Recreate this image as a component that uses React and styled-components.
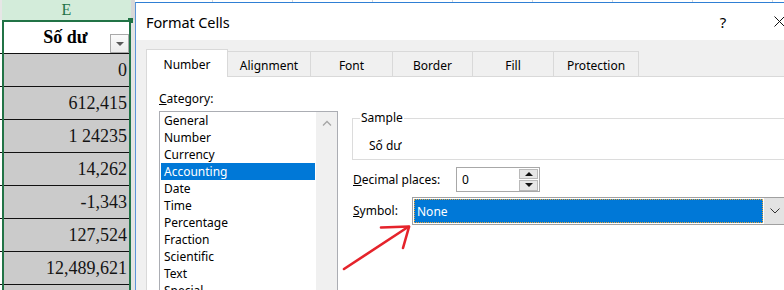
import React from 'react';
import styled, { createGlobalStyle } from 'styled-components';

const Global = createGlobalStyle`
  html, body { margin: 0; padding: 0; width: 784px; height: 290px; overflow: hidden; background: #fff; }
  #root { width: 784px; height: 290px; }
`;

const Screen = styled.div`
  position: relative;
  display: flex;
  width: 784px;
  height: 290px;
  overflow: hidden;
  background: #fff;
`;

/* ---------- spreadsheet ---------- */
const Sheet = styled.div`
  display: flex;
  flex: none;
  width: 135px;
  font-family: "Liberation Serif", "Times New Roman", serif;
`;

const Strip = styled.div`
  display: flex;
  flex-direction: column;
  flex: none;
  width: ${p => p.$w}px;
  background: ${p => p.$bg};
`;

const StripHead = styled.div`
  flex: none;
  height: 20px;
  background: ${p => p.$bg};
`;

const StripCell = styled.div`
  flex: none;
  box-sizing: border-box;
  height: ${p => p.$h}px;
  border-bottom: 1px solid #111;
`;

const ColumnE = styled.div`
  display: flex;
  flex-direction: column;
  flex: none;
  width: 129px;
`;

const ColHead = styled.div`
  flex: none;
  height: 20px;
  display: flex;
  align-items: center;
  justify-content: center;
  background: #d3ecda;
  color: #217346;
  font-size: 16px;
  line-height: 20px;
`;

const Selection = styled.div`
  position: relative;
  flex: 1;
  border: 2px solid #217346;
  border-bottom: none;
  background: #cbcbcb;
`;

const Handle = styled.div`
  position: absolute;
  top: -4px;
  right: -4px;
  width: 5px;
  height: 5px;
  background: #217346;
`;

const HeadCell = styled.div`
  position: relative;
  box-sizing: border-box;
  height: 32px;
  display: flex;
  align-items: center;
  justify-content: center;
  background: #fff;
  border-bottom: 1px solid #111;
  font-weight: bold;
  font-size: 18px;
  color: #000;
  padding-right: 2px;
`;

const FilterButton = styled.div`
  position: absolute;
  right: 0;
  bottom: 0;
  box-sizing: border-box;
  width: 19px;
  height: 19px;
  border: 1px solid #a9a9a9;
  background: linear-gradient(#fbfbfb, #ececec);
  display: flex;
  align-items: center;
  justify-content: center;
  &::after {
    content: "";
    border-left: 4px solid transparent;
    border-right: 4px solid transparent;
    border-top: 4px solid #5a5a5a;
  }
`;

const DataCell = styled.div`
  box-sizing: border-box;
  height: 33px;
  display: flex;
  align-items: center;
  justify-content: flex-end;
  padding-right: 2px;
  border-bottom: 1px solid #111;
  font-size: 18px;
  color: #141414;
`;

/* ---------- dialog ---------- */
const DialogArea = styled.div`
  flex: none;
  padding-top: 2px;
  background: repeating-linear-gradient(90deg, transparent 0, transparent 77px, #d6d6d6 77px, #d6d6d6 78px, transparent 78px, transparent 80px);
`;

const Dialog = styled.div`
  width: 672px;
  height: 290px;
  display: flex;
  flex-direction: column;
  border-top: 1px solid #2f7fd4;
  border-left: 1px solid #5b95d8;
  background: #f0f0f0;
  font-family: "Noto Sans", "Open Sans", sans-serif;
  font-size: 12px;
  color: #000;
`;

const TitleBar = styled.div`
  flex: none;
  height: 37px;
  display: flex;
  align-items: center;
  padding: 0 6px 0 10px;
  background: #fff;
`;

const Title = styled.div`
  font-size: 14.5px;
  letter-spacing: -0.1px;
`;

const TitleButton = styled.div`
  width: 46px;
  height: 37px;
  display: flex;
  align-items: center;
  justify-content: center;
  font-size: 15px;
  margin-left: ${p => (p.$first ? 'auto' : '10px')};
`;

const Body = styled.div`
  flex: 1;
  display: flex;
  flex-direction: column;
  padding: 9px 0 0 10px;
`;

const Tabs = styled.div`
  flex: none;
  display: flex;
  align-items: flex-end;
  height: 27px;
`;

const Tab = styled.div`
  position: relative;
  z-index: ${p => (p.$active ? 1 : 0)};
  box-sizing: border-box;
  width: ${p => p.$w}px;
  height: ${p => (p.$active ? 28 : 25)}px;
  margin-bottom: ${p => (p.$active ? -1 : 0)}px;
  margin-left: -1px;
  display: flex;
  align-items: center;
  justify-content: center;
  border: 1px solid #d9d9d9;
  border-bottom: none;
  background: ${p => (p.$active ? '#fff' : '#f0f0f0')};
  padding-top: 2px;
  &:first-child { margin-left: 0; }
`;

const Panel = styled.div`
  flex: 1;
  display: flex;
  align-items: flex-start;
  background: #fff;
  border-top: 1px solid #d9d9d9;
  border-left: 1px solid #d9d9d9;
`;

const CategoryCol = styled.div`
  flex: none;
  display: flex;
  flex-direction: column;
  padding: 14px 0 0 12px;
`;

const Label = styled.div`
  line-height: 16px;
  width: ${p => (p.$w ? `${p.$w}px` : 'auto')};
  flex: none;
`;

const ListBox = styled.div`
  box-sizing: border-box;
  margin-top: 4px;
  width: 179px;
  height: 200px;
  display: flex;
  border: 1px solid #abadb3;
`;

const Items = styled.div`
  flex: 1;
  padding: 0 1px;
`;

const Item = styled.div`
  height: 17px;
  line-height: 18px;
  padding-left: 3px;
  background: ${p => (p.$sel ? '#0078d7' : 'transparent')};
  color: ${p => (p.$sel ? '#fff' : '#000')};
`;

const ScrollBar = styled.div`
  flex: none;
  width: 21px;
  background: #f0f0f0;
  display: flex;
  justify-content: center;
  padding-top: 8px;
  box-sizing: border-box;
`;

const RightCol = styled.div`
  flex: none;
  width: 460px;
  margin-left: 14px;
  padding-top: 33px;
  display: flex;
  flex-direction: column;
`;

const Group = styled.fieldset`
  margin: 0;
  min-width: 0;
  padding: 0 7px 5px;
  border: 1px solid #dcdcdc;
`;

const Legend = styled.legend`
  padding: 0 1px;
  line-height: 16px;
`;

const SampleText = styled.div`
  margin-top: 12px;
  padding-left: 9px;
  line-height: 16px;
`;

const FieldRow = styled.div`
  display: flex;
  align-items: center;
  padding-left: 1px;
  margin-top: ${p => p.$mt}px;
`;

const NumberBox = styled.div`
  box-sizing: border-box;
  width: 84px;
  height: 25px;
  display: flex;
  align-items: center;
  border: 1px solid #a8a8a8;
  background: #fff;
  padding: 0 1px 0 5px;
`;

const Spinner = styled.div`
  margin-left: auto;
  width: 19px;
  height: 22px;
  display: flex;
  flex-direction: column;
  gap: 1px;
`;

const SpinButton = styled.div`
  flex: 1;
  box-sizing: border-box;
  border: 1px solid #b9b9b9;
  background: #e6e6e6;
  display: flex;
  align-items: center;
  justify-content: center;
  &::after {
    content: "";
    border-left: 4px solid transparent;
    border-right: 4px solid transparent;
    ${p => (p.$up ? 'border-bottom: 4px solid #111;' : 'border-top: 4px solid #111;')}
  }
`;

const Combo = styled.div`
  box-sizing: border-box;
  width: 374px;
  height: 28px;
  display: flex;
  border: 1px solid #a0a0a0;
  background: #fff;
`;

const ComboField = styled.div`
  flex: 1;
  padding: 1px;
  display: flex;
`;

const ComboValue = styled.div`
  flex: 1;
  box-sizing: border-box;
  display: flex;
  align-items: center;
  padding-left: 2px;
  background: #0078d7;
  color: #fff;
  border: 1px dotted #e8a33a;
`;

const ComboButton = styled.div`
  flex: none;
  width: 21px;
  background: #e3e3e3;
  display: flex;
  align-items: center;
  justify-content: center;
`;

const Overlay = styled.svg`
  position: absolute;
  left: 0;
  top: 0;
  pointer-events: none;
`;

const values = ['0', '612,415', '1 24235', '14,262', '-1,343', '127,524', '12,489,621', ''];
const categories = ['General', 'Number', 'Currency', 'Accounting', 'Date', 'Time', 'Percentage', 'Fraction', 'Scientific', 'Text', 'Special'];
const tabs = [
  ['Number', 82], ['Alignment', 84], ['Font', 83], ['Border', 81], ['Fill', 82], ['Protection', 86],
];

export default function App() {
  return (
    <>
      <Global />
      <Screen>
        <Sheet>
          <Strip $w={2} $bg="#fff">
            <StripHead $bg="#e6e6e6" />
            <StripCell $h={34} />
            {values.map((v, i) => <StripCell key={i} $h={33} />)}
          </Strip>
          <ColumnE>
            <ColHead>E</ColHead>
            <Selection>
              <Handle />
              <HeadCell>
                Số dư
                <FilterButton />
              </HeadCell>
              {values.map((v, i) => <DataCell key={i}>{v}</DataCell>)}
            </Selection>
          </ColumnE>
          <Strip $w={4} $bg="#e4e4e4">
            <StripHead $bg="#d8d8d8" />
          </Strip>
        </Sheet>

        <DialogArea>
          <Dialog>
            <TitleBar>
              <Title>Format Cells</Title>
              <TitleButton $first>?</TitleButton>
              <TitleButton>
                <svg width="11" height="11" viewBox="0 0 11 11">
                  <path d="M0.5 0.5 L10.5 10.5 M10.5 0.5 L0.5 10.5" stroke="#111" strokeWidth="1" fill="none" />
                </svg>
              </TitleButton>
            </TitleBar>
            <Body>
              <Tabs>
                {tabs.map(([t, w], i) => (
                  <Tab key={t} $w={w} $active={i === 0}>{t}</Tab>
                ))}
              </Tabs>
              <Panel>
                <CategoryCol>
                  <Label><u>C</u>ategory:</Label>
                  <ListBox>
                    <Items>
                      {categories.map(c => <Item key={c} $sel={c === 'Accounting'}>{c}</Item>)}
                    </Items>
                    <ScrollBar>
                      <svg width="10" height="6" viewBox="0 0 10 6">
                        <path d="M1 5.5 L5 1.5 L9 5.5" stroke="#a6a6a6" strokeWidth="1.3" fill="none" />
                      </svg>
                    </ScrollBar>
                  </ListBox>
                </CategoryCol>
                <RightCol>
                  <Group>
                    <Legend>Sample</Legend>
                    <SampleText>Số dư</SampleText>
                  </Group>
                  <FieldRow $mt={7}>
                    <Label $w={103}><u>D</u>ecimal places:</Label>
                    <NumberBox>
                      0
                      <Spinner>
                        <SpinButton $up />
                        <SpinButton />
                      </Spinner>
                    </NumberBox>
                  </FieldRow>
                  <FieldRow $mt={5}>
                    <Label $w={59}><u>S</u>ymbol:</Label>
                    <Combo>
                      <ComboField>
                        <ComboValue>None</ComboValue>
                      </ComboField>
                      <ComboButton>
                        <svg width="10" height="6" viewBox="0 0 10 6">
                          <path d="M0.5 0.5 L5 5 L9.5 0.5" stroke="#333" strokeWidth="1" fill="none" />
                        </svg>
                      </ComboButton>
                    </Combo>
                  </FieldRow>
                </RightCol>
              </Panel>
            </Body>
          </Dialog>
        </DialogArea>

        <Overlay width="784" height="290" viewBox="0 0 784 290">
          <g stroke="#e5232b" strokeWidth="2.6" strokeLinecap="round" fill="none">
            <path d="M344 269 L408 227" />
            <path d="M381 227.5 L409 226.5" />
            <path d="M409 227 L403 248" />
          </g>
        </Overlay>
      </Screen>
    </>
  );
}
